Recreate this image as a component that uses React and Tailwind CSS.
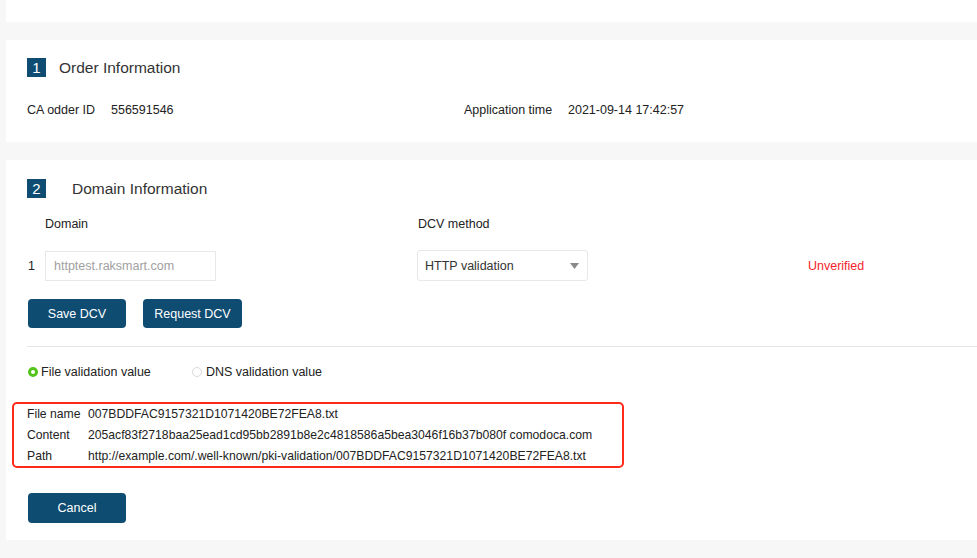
import React, { useState } from 'react';

const Badge = ({ n }) => (
    <span className="w-[19px] h-[19px] bg-[#0f4c72] text-white text-[15px] leading-none flex items-center justify-center">
        {n}
    </span>
);

const Radio = ({ checked, label, onClick }) => (
    <button onClick={onClick} className="flex items-center gap-[3px] leading-[16px] text-[#222]">
        {checked ? (
            <span className="w-[10px] h-[10px] rounded-full border-[3px] border-[#52c41a] bg-white" />
        ) : (
            <span className="w-[10px] h-[10px] rounded-full border border-[#d9d9d9] bg-white mr-[1px]" />
        )}
        {label}
    </button>
);

const App = () => {
    const [mode, setMode] = useState('file');

    const rows = [
        ['File name', '007BDDFAC9157321D1071420BE72FEA8.txt'],
        ['Content', '205acf83f2718baa25ead1cd95bb2891b8e2c4818586a5bea3046f16b37b080f comodoca.com'],
        ['Path', 'http://example.com/.well-known/pki-validation/007BDDFAC9157321D1071420BE72FEA8.txt']
    ];

    return (
        <div className="min-h-[558px] bg-[#f7f7f7] pl-[6px] flex flex-col gap-[18px] font-['Liberation_Sans',Arial,sans-serif] text-[12.5px] leading-[16px] text-[#222]">
            {/* Top card (cut off) */}
            <div className="bg-white h-[22px]" />

            {/* Order Information */}
            <div className="bg-white h-[102px] pl-[21px] pt-[18px]">
                <div className="flex items-center gap-[13px]">
                    <Badge n="1" />
                    <h2 className="text-[15.5px] leading-[19px] text-[#333]">Order Information</h2>
                </div>
                <div className="flex mt-[25px] whitespace-nowrap">
                    <div className="w-[437px] flex">
                        <span className="w-[84px]">CA odder ID</span>
                        <span>556591546</span>
                    </div>
                    <div className="flex">
                        <span className="w-[104px]">Application time</span>
                        <span>2021-09-14 17:42:57</span>
                    </div>
                </div>
            </div>

            {/* Domain Information */}
            <div className="bg-white h-[380px] pt-[19px]">
                <div className="pl-[21px] flex items-center gap-[26px]">
                    <Badge n="2" />
                    <h2 className="text-[15.5px] leading-[19px] text-[#333]">Domain Information</h2>
                </div>

                <div className="flex pl-[39px] mt-[18px]">
                    <span className="w-[373px]">Domain</span>
                    <span>DCV method</span>
                </div>

                <div className="flex items-center mt-[18px] pl-[22px]">
                    <span className="w-[17px]">1</span>
                    <input
                        className="w-[171px] h-[30px] border border-[#e8e8e8] px-[8px] text-[12.5px] outline-none placeholder:text-[#a0a0a0]"
                        placeholder="httptest.raksmart.com"
                    />
                    <div className="ml-[201px] w-[171px] h-[31px] border border-[#e8e8e8] rounded-[3px] flex items-center justify-between pl-[7px] pr-[8px] text-[#333]">
                        <span>HTTP validation</span>
                        <svg width="9" height="6" viewBox="0 0 9 6"><path d="M0 0h9L4.5 6z" fill="#8a8a8a" /></svg>
                    </div>
                    <span className="ml-[220px] text-[#f5222d]">Unverified</span>
                </div>

                <div className="flex gap-[17px] pl-[22px] mt-[18px]">
                    <button className="w-[98px] h-[29px] rounded-[4px] bg-[#0f4c72] text-white">Save DCV</button>
                    <button className="w-[99px] h-[29px] rounded-[4px] bg-[#0f4c72] text-white">Request DCV</button>
                </div>

                <div className="ml-[21px] mt-[18px] border-t border-[#e6e6e6]" />

                <div className="flex pl-[22px] mt-[17px]">
                    <div className="w-[164px]">
                        <Radio checked={mode === 'file'} label="File validation value" onClick={() => setMode('file')} />
                    </div>
                    <Radio checked={mode === 'dns'} label="DNS validation value" onClick={() => setMode('dns')} />
                </div>

                {/* Validation values */}
                <div className="ml-[6px] w-[612px] h-[66px] mt-[22px] border-2 border-[#ff2a1a] rounded-[5px] pl-[13px] flex flex-col justify-center whitespace-nowrap text-[12.2px]">
                    {rows.map(([k, v]) => (
                        <div key={k} className="flex h-[21px] items-center">
                            <span className="w-[61px]">{k}</span>
                            <span>{v}</span>
                        </div>
                    ))}
                </div>

                <button className="ml-[22px] mt-[25px] w-[98px] h-[30px] rounded-[4px] bg-[#0f4c72] text-white">Cancel</button>
            </div>
        </div>
    );
};

export default App;
